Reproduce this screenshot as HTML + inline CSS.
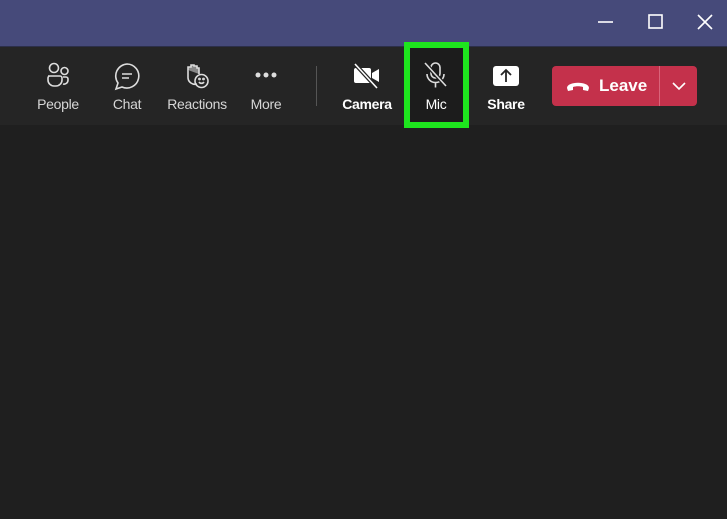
<!DOCTYPE html><html><head><style>
body{margin:0;width:727px;height:519px;background:#1f1f1f;font-family:"Liberation Sans",sans-serif;overflow:hidden;position:relative}
.title{position:absolute;left:0;top:0;width:727px;height:46px;background:#464a7a}
.bar{position:absolute;left:0;top:46px;width:727px;height:78px;background:#252525;border-top:1px solid #2c2f4a}
.it{position:absolute;top:96px;width:80px;text-align:center;font-size:14px;color:#d6d6d6;letter-spacing:-0.3px}
.b{color:#fff;font-weight:bold}
svg{position:absolute}
</style></head><body>
<div class="title"></div>
<svg style="left:597px;top:12px" width="120" height="22" fill="none" stroke="#fff" stroke-width="1.6">
<line x1="1" y1="10" x2="16" y2="10"/><rect x="52" y="3" width="13" height="13"/><path d="M101 3l14 14M115 3l-14 14"/></svg>
<div class="bar"></div>
<!-- people -->
<svg style="left:45px;top:62px" width="28" height="28" fill="none" stroke="#ddd" stroke-width="1.6">
<circle cx="9" cy="6" r="4.5"/><circle cx="19.5" cy="9" r="3.5"/><path d="M3 14h12a2 2 0 0 1 2 2v2a6 6 0 0 1-6 6h-2a6 6 0 0 1-6-6v-2a2 2 0 0 1 2-2z"/><path d="M18 15h3a2 2 0 0 1 2 2v1a4 4 0 0 1-5 4"/></svg>
<div class="it" style="left:18px">People</div>
<!-- chat -->
<svg style="left:114px;top:63px" width="28" height="28" fill="none" stroke="#ddd" stroke-width="1.6">
<path d="M13 1a12 12 0 1 1-5 23l-6 2 2-6A12 12 0 0 1 13 1z"/><path d="M8 11h10M8 15h7"/></svg>
<div class="it" style="left:87px">Chat</div>
<!-- reactions -->
<svg style="left:184px;top:62px" width="28" height="28" fill="none" stroke="#ddd" stroke-width="1.6">
<path d="M4 8v8a7 7 0 0 0 9 6" /><path d="M4 8V5h3v-2h3v1h3v2h2v6" fill="#888"/><circle cx="17.5" cy="19" r="6.5"/><path d="M15 20a3 3 0 0 0 5 0"/><circle cx="15.5" cy="17" r=".6"/><circle cx="19.5" cy="17" r=".6"/></svg>
<div class="it" style="left:157px">Reactions</div>
<!-- more -->
<svg style="left:254px;top:70px" width="26" height="10" fill="#ddd"><circle cx="4" cy="5" r="2.5"/><circle cx="12" cy="5" r="2.5"/><circle cx="20" cy="5" r="2.5"/></svg>
<div class="it" style="left:226px">More</div>
<div style="position:absolute;left:316px;top:66px;width:1px;height:40px;background:#555"></div>
<!-- camera -->
<svg style="left:353px;top:63px" width="28" height="26">
<rect x="1" y="5" width="17" height="15" rx="2" fill="#fff"/><path d="M19 10l7-4v13l-7-4z" fill="#fff"/><path d="M2 1l22 24" stroke="#252525" stroke-width="4"/><path d="M2 1l22 24" stroke="#fff" stroke-width="1.6"/></svg>
<div class="it b" style="left:327px">Camera</div>
<!-- mic -->
<div style="position:absolute;left:404px;top:42px;width:53px;height:74px;border:6px solid #1ee51e;background:#1c1c1c"></div>
<svg style="left:422px;top:61px" width="28" height="28" fill="none" stroke="#ddd" stroke-width="1.6">
<rect x="9" y="2" width="9" height="15" rx="4.5"/><path d="M5 13a8.5 8.5 0 0 0 17 0M13.5 21.5v5"/><path d="M3 2l21 23" stroke="#1c1c1c" stroke-width="4"/><path d="M3 2l21 23"/></svg>
<div class="it b" style="left:396px;font-weight:normal;color:#fff">Mic</div>
<!-- share -->
<svg style="left:492px;top:65px" width="28" height="22">
<rect x="1" y="1" width="26" height="20" rx="3" fill="#fff"/><path d="M14 17V6M9 10l5-5 5 5" stroke="#252525" stroke-width="1.8" fill="none"/></svg>
<div class="it b" style="left:466px">Share</div>
<!-- leave -->
<div style="position:absolute;left:552px;top:66px;width:145px;height:40px;background:#c4314b;border-radius:4px"></div>
<div style="position:absolute;left:659px;top:66px;width:1px;height:40px;background:#d9647a"></div>
<svg style="left:565px;top:79px" width="26" height="14"><path d="M2 9c0-7 22-7 22 0l-1 3-5-1v-3c-3-1-7-1-10 0v3l-5 1z" fill="#fff"/></svg>
<div style="position:absolute;left:599px;top:76px;color:#fff;font-weight:bold;font-size:17px">Leave</div>
<svg style="left:671px;top:81px" width="16" height="10" fill="none" stroke="#fff" stroke-width="1.6"><path d="M2 2l6 6 6-6"/></svg>
</body></html>
